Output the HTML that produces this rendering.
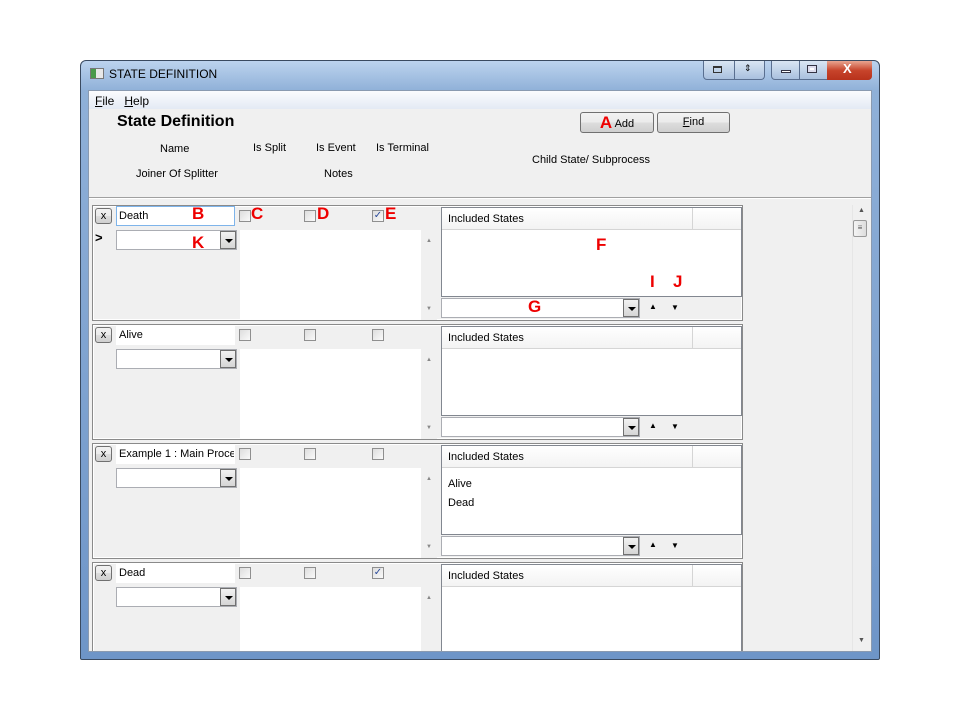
<!DOCTYPE html>
<html><head><meta charset="utf-8"><style>
*{margin:0;padding:0;box-sizing:border-box}
body{width:960px;height:720px;background:#fff;position:relative;overflow:hidden;font-family:"Liberation Sans",sans-serif;font-size:11px;color:#000}
.a{position:absolute}
.win{left:80px;top:60px;width:800px;height:600px;border:1px solid #3a4a60;border-radius:6px 6px 2px 2px;background:linear-gradient(#bcd3ee,#8fb0d8 30px,#6e95c8);}
.client{left:88px;top:90px;width:784px;height:562px;background:#f0f0f0;border:1px solid #8a9ab0;overflow:hidden}
.tb{background:#fff;border:1px solid #abadb3}
.cb{width:12px;height:12px;border:1px solid #8f8f8f;background:linear-gradient(135deg,#ddd,#fafafa)}
.red{color:#e00;font-weight:bold;font-size:17px}
.dd{width:16px;height:18px;background:linear-gradient(#f2f2f2,#d5d5d5);border:1px solid #707070}
.dd:after{content:"";position:absolute;left:4px;top:7px;border-left:4px solid transparent;border-right:4px solid transparent;border-top:4px solid #000}
.btn{border:1px solid #707070;border-radius:3px;background:linear-gradient(#f2f2f2,#ebebeb 50%,#dddddd 51%,#cfcfcf);text-align:center;line-height:19px;font-size:11px}
.row{left:3px;width:651px;height:116px;border:1px solid #8a8a8a;box-shadow:inset 0 0 0 1px #fff;background:#f0f0f0}
</style></head><body>
<div class="a win"></div>
<div class="a" style="left:90px;top:68px;width:14px;height:11px;background:linear-gradient(90deg,#4a9a4a 40%,#e8e8e8 40%);border:1px solid #777"></div>
<div class="a" style="left:109px;top:67px;font-size:12px;color:#000">STATE DEFINITION</div>
<div class="a" style="left:703px;top:61px;width:62px;height:19px;border:1px solid #5a6f90;border-top:none;border-radius:0 0 4px 4px;background:linear-gradient(#d9e5f3,#a9c0de)"></div>
<div class="a" style="left:734px;top:61px;width:1px;height:19px;background:#5a6f90"></div>
<div class="a" style="left:713px;top:66px;width:9px;height:7px;border:1px solid #333;border-top-width:2px"></div>
<div class="a" style="left:744px;top:63px;font-size:9px">⇕</div>
<div class="a" style="left:771px;top:61px;width:101px;height:19px;border:1px solid #5a6f90;border-top:none;border-radius:0 0 4px 4px;background:linear-gradient(#d9e5f3,#a9c0de)"></div>
<div class="a" style="left:827px;top:61px;width:45px;height:19px;border-radius:0 0 4px 0;background:linear-gradient(#e9a590,#c7442b 50%,#b8321c)"></div>
<div class="a" style="left:799px;top:61px;width:1px;height:19px;background:#5a6f90"></div>
<div class="a" style="left:781px;top:70px;width:10px;height:3px;background:#fff;border:1px solid #334"></div>
<div class="a" style="left:807px;top:65px;width:10px;height:8px;border:1px solid #334;background:#fff;box-shadow:inset 0 0 0 2px #dde"></div>
<div class="a" style="left:843px;top:61px;color:#fff;font-weight:bold;font-size:13px">X</div>

<div class="a client">
 <div class="a" style="left:0;top:0;width:784px;height:18px;background:linear-gradient(#fbfcfe,#e3eaf4)"></div>
 <div class="a" style="left:6px;top:3px;font-size:12px"><u>F</u>ile&nbsp;&nbsp;&nbsp;<u>H</u>elp</div>
 <div class="a" style="left:28px;top:22px;font-size:16px;font-weight:bold">State Definition</div>
 <div class="a" style="left:71px;top:52px">Name</div>
 <div class="a" style="left:164px;top:51px">Is Split</div>
 <div class="a" style="left:227px;top:51px">Is Event</div>
 <div class="a" style="left:287px;top:51px">Is Terminal</div>
 <div class="a" style="left:47px;top:77px">Joiner Of Splitter</div>
 <div class="a" style="left:235px;top:77px">Notes</div>
 <div class="a" style="left:443px;top:63px">Child State/ Subprocess</div>
 <div class="a btn" style="left:491px;top:21px;width:74px;height:21px"><span class="red" style="font-size:17px;vertical-align:-1px">A</span> Add</div>
 <div class="a btn" style="left:568px;top:21px;width:73px;height:21px"><u>F</u>ind</div>
 <div class="a" style="left:0;top:106px;width:784px;height:1px;background:#a0a0a0"></div>
 <div class="a" style="left:0;top:107px;width:784px;height:1px;background:#fff"></div>
 <!-- scrollbar -->
 <div class="a" style="left:763px;top:114px;width:17px;height:446px;background:#f0f0f0;border-left:1px solid #e6e6e6"></div>
 <div class="a" style="left:769px;top:116px;font-size:7px;color:#555">▲</div>
 <div class="a" style="left:764px;top:129px;width:14px;height:17px;border:1px solid #999;border-radius:2px;background:linear-gradient(90deg,#f4f4f4,#ddd);font-size:8px;text-align:center;line-height:14px;color:#555">≡</div>
 <div class="a" style="left:769px;top:546px;font-size:7px;color:#555">▼</div>

 <!-- rows: top = 114 + 119*i -->
 <div class="a" style="left:0;top:114px;width:760px;height:460px">
  <!-- row 1 -->
  <div class="a row" style="top:0"></div>
  <div class="a btn" style="left:6px;top:3px;width:17px;height:16px;line-height:14px">x</div>
  <div class="a tb" style="left:27px;top:1px;width:119px;height:20px;border-color:#7eb4ea;padding:3px 2px">Death</div>
  <div class="a cb" style="left:150px;top:5px"></div><div class="a red" style="left:162px;top:-1px">C</div>
  <div class="a cb" style="left:215px;top:5px"></div><div class="a red" style="left:228px;top:-1px">D</div>
  <div class="a cb" style="left:283px;top:5px;color:#2a4a9a;font-size:10px;line-height:10px;text-align:center">✓</div><div class="a red" style="left:296px;top:-1px">E</div>
  <div class="a red" style="left:103px;top:-1px">B</div>
  <div class="a" style="left:6px;top:25px;font-weight:bold;font-size:13px">&gt;</div>
  <div class="a tb" style="left:27px;top:25px;width:121px;height:20px"></div>
  <div class="a dd" style="left:131px;top:26px"></div>
  <div class="a red" style="left:103px;top:28px">K</div>
  <div class="a" style="left:151px;top:25px;width:197px;height:90px;background:#fff"></div>
  <div class="a" style="left:332px;top:25px;width:16px;height:90px;background:#f0f0f0;font-size:6px;color:#888;text-align:center;padding-top:8px">▲<div style="margin-top:62px">▼</div></div>
  <div class="a" style="left:352px;top:2px;width:301px;height:90px;background:#fff;border:1px solid #828790"></div>
  <div class="a" style="left:353px;top:3px;width:299px;height:22px;background:linear-gradient(#fff,#f3f3f3);border-bottom:1px solid #d5d5d5;padding:5px 6px">Included States</div>
  <div class="a" style="left:603px;top:3px;width:1px;height:22px;background:#d5d5d5"></div>
  <div class="a red" style="left:507px;top:30px">F</div>
  <div class="a red" style="left:561px;top:67px">I</div>
  <div class="a red" style="left:584px;top:67px">J</div>
  <div class="a tb" style="left:352px;top:93px;width:199px;height:20px"></div>
  <div class="a dd" style="left:534px;top:94px"></div>
  <div class="a red" style="left:439px;top:92px">G</div>
  <div class="a" style="left:560px;top:97px;font-size:8px">▲</div>
  <div class="a" style="left:582px;top:98px;font-size:8px">▼</div>

  <!-- row 2 -->
  <div class="a row" style="top:119px"></div>
  <div class="a btn" style="left:6px;top:122px;width:17px;height:16px;line-height:14px">x</div>
  <div class="a tb" style="left:27px;top:120px;width:119px;height:20px;padding:3px 2px;border-color:#fff">Alive</div>
  <div class="a cb" style="left:150px;top:124px"></div><div class="a cb" style="left:215px;top:124px"></div><div class="a cb" style="left:283px;top:124px"></div>
  <div class="a tb" style="left:27px;top:144px;width:121px;height:20px"></div><div class="a dd" style="left:131px;top:145px"></div>
  <div class="a" style="left:151px;top:144px;width:197px;height:90px;background:#fff"></div>
  <div class="a" style="left:332px;top:144px;width:16px;height:90px;background:#f0f0f0;font-size:6px;color:#888;text-align:center;padding-top:8px">▲<div style="margin-top:62px">▼</div></div>
  <div class="a" style="left:352px;top:121px;width:301px;height:90px;background:#fff;border:1px solid #828790"></div>
  <div class="a" style="left:353px;top:122px;width:299px;height:22px;background:linear-gradient(#fff,#f3f3f3);border-bottom:1px solid #d5d5d5;padding:5px 6px">Included States</div>
  <div class="a" style="left:603px;top:122px;width:1px;height:22px;background:#d5d5d5"></div>
  <div class="a tb" style="left:352px;top:212px;width:199px;height:20px"></div><div class="a dd" style="left:534px;top:213px"></div>
  <div class="a" style="left:560px;top:216px;font-size:8px">▲</div><div class="a" style="left:582px;top:217px;font-size:8px">▼</div>

  <!-- row 3 -->
  <div class="a row" style="top:238px"></div>
  <div class="a btn" style="left:6px;top:241px;width:17px;height:16px;line-height:14px">x</div>
  <div class="a tb" style="left:27px;top:239px;width:119px;height:20px;padding:3px 2px;border-color:#fff;white-space:nowrap;overflow:hidden">Example 1 : Main Process</div>
  <div class="a cb" style="left:150px;top:243px"></div><div class="a cb" style="left:215px;top:243px"></div><div class="a cb" style="left:283px;top:243px"></div>
  <div class="a tb" style="left:27px;top:263px;width:121px;height:20px"></div><div class="a dd" style="left:131px;top:264px"></div>
  <div class="a" style="left:151px;top:263px;width:197px;height:90px;background:#fff"></div>
  <div class="a" style="left:332px;top:263px;width:16px;height:90px;background:#f0f0f0;font-size:6px;color:#888;text-align:center;padding-top:8px">▲<div style="margin-top:62px">▼</div></div>
  <div class="a" style="left:352px;top:240px;width:301px;height:90px;background:#fff;border:1px solid #828790"></div>
  <div class="a" style="left:353px;top:241px;width:299px;height:22px;background:linear-gradient(#fff,#f3f3f3);border-bottom:1px solid #d5d5d5;padding:5px 6px">Included States</div>
  <div class="a" style="left:603px;top:241px;width:1px;height:22px;background:#d5d5d5"></div>
  <div class="a" style="left:359px;top:270px;line-height:19px">Alive<br>Dead</div>
  <div class="a tb" style="left:352px;top:331px;width:199px;height:20px"></div><div class="a dd" style="left:534px;top:332px"></div>
  <div class="a" style="left:560px;top:335px;font-size:8px">▲</div><div class="a" style="left:582px;top:336px;font-size:8px">▼</div>

  <!-- row 4 -->
  <div class="a row" style="top:357px"></div>
  <div class="a btn" style="left:6px;top:360px;width:17px;height:16px;line-height:14px">x</div>
  <div class="a tb" style="left:27px;top:358px;width:119px;height:20px;padding:3px 2px;border-color:#fff">Dead</div>
  <div class="a cb" style="left:150px;top:362px"></div><div class="a cb" style="left:215px;top:362px"></div><div class="a cb" style="left:283px;top:362px;color:#2a4a9a;font-size:10px;line-height:10px;text-align:center">✓</div>
  <div class="a tb" style="left:27px;top:382px;width:121px;height:20px"></div><div class="a dd" style="left:131px;top:383px"></div>
  <div class="a" style="left:151px;top:382px;width:197px;height:90px;background:#fff"></div>
  <div class="a" style="left:332px;top:382px;width:16px;height:90px;background:#f0f0f0;font-size:6px;color:#888;text-align:center;padding-top:8px">▲</div>
  <div class="a" style="left:352px;top:359px;width:301px;height:90px;background:#fff;border:1px solid #828790"></div>
  <div class="a" style="left:353px;top:360px;width:299px;height:22px;background:linear-gradient(#fff,#f3f3f3);border-bottom:1px solid #d5d5d5;padding:5px 6px">Included States</div>
  <div class="a" style="left:603px;top:360px;width:1px;height:22px;background:#d5d5d5"></div>
 </div>
</div>
</body></html>
